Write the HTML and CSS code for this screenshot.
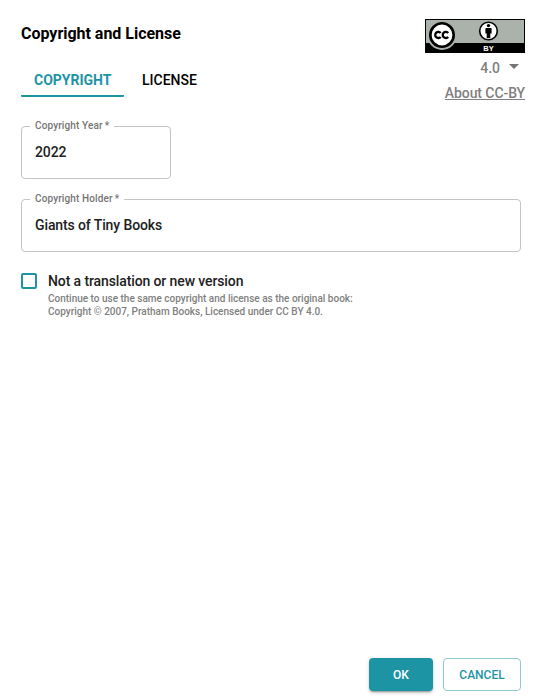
FILE: index.html
```html
<!DOCTYPE html>
<html lang="en">
<head>
<meta charset="utf-8">
<title>Copyright and License</title>
<link rel="stylesheet" href="styles.css">
</head>
<body>
<div class="dialog">
  <header class="header">
    <div class="heading">
      <h1 class="title">Copyright and License</h1>
      <nav class="tabs">
        <button class="tab tab-active">COPYRIGHT</button>
        <button class="tab">LICENSE</button>
      </nav>
    </div>
    <aside class="license">
      <svg class="badge" width="100" height="34" viewBox="0 0 100 34">
        <rect width="100" height="34" fill="#000"/>
        <rect x="1" y="1" width="98" height="23" fill="#aab2ab"/>
        <circle cx="17" cy="16" r="15" fill="#aab2ab"/>
        <circle cx="17" cy="16" r="11.7" fill="#fff" stroke="#000" stroke-width="2.6"/>
        <g fill="none" stroke="#000" stroke-width="2.3">
          <path d="M15.7 13.9A3.1 3.1 0 1 0 15.7 17.9"/>
          <path d="M23.2 13.9A3.1 3.1 0 1 0 23.2 17.9"/>
        </g>
        <circle cx="63.5" cy="12" r="8.8" fill="#fff" stroke="#000" stroke-width="1.6"/>
        <circle cx="63.5" cy="6.6" r="1.7"/>
        <path d="M61.2 9h4.6q.8 0 .8.8v4.7h-1.3v4.6h-3.6v-4.6h-1.3V9.8q0-.8.8-.8z"/>
        <text class="badge-text" x="63.5" y="31.7" text-anchor="middle">BY</text>
      </svg>
      <div class="version"><span>4.0</span><span class="arrow"></span></div>
      <a class="about">About CC-BY</a>
    </aside>
  </header>
  <main class="form">
    <fieldset class="field field-year">
      <legend>Copyright Year&thinsp;*</legend>
      <div class="value">2022</div>
    </fieldset>
    <fieldset class="field field-holder">
      <legend>Copyright Holder&thinsp;*</legend>
      <div class="value">Giants of Tiny Books</div>
    </fieldset>
    <div class="option">
      <span class="checkbox"></span>
      <div>
        <div class="option-label">Not a translation or new version</div>
        <div class="note">Continue to use the same copyright and license as the original book:<br>Copyright © 2007, Pratham Books, Licensed under CC BY 4.0.</div>
      </div>
    </div>
  </main>
  <footer class="actions">
    <button class="button primary">OK</button>
    <button class="button outlined">CANCEL</button>
  </footer>
</div>
</body>
</html>
```
FILE: styles.css
```css
* { box-sizing: border-box; }
body {
  margin: 0;
  background: #fff;
  color: #000;
  font-family: Roboto, sans-serif;
  font-weight: 500;
}
button { font-family: inherit; cursor: pointer; }
.dialog {
  display: flex;
  flex-direction: column;
  height: 699px;
  padding: 19px 19px 8px 21px;
}
.header {
  display: flex;
  justify-content: space-between;
  height: 100px;
}
.title {
  margin: 5px 0 0;
  font-size: 16px;
  line-height: 20px;
  font-weight: 700;
  letter-spacing: -0.02px;
}
.tabs { display: flex; gap: 5px; margin-top: 20px; }
.tab {
  height: 33px;
  padding: 1px 13px 0;
  border: 0;
  border-bottom: 2px solid transparent;
  background: none;
  color: #000;
  font-size: 14px;
  font-weight: 500;
}
.tab-active {
  width: 103px;
  border-color: #1d94a4;
  border-radius: 1px;
  color: #1d94a4;
  font-weight: 700;
}
.license {
  display: flex;
  flex-direction: column;
  align-items: flex-end;
  color: #808080;
  font-size: 14px;
}
.badge { display: block; }
.badge-text { fill: #fff; font: 700 7.5px "Liberation Sans", sans-serif; }
.version {
  display: flex;
  align-items: center;
  gap: 9px;
  margin-top: 6px;
  padding-right: 6px;
  line-height: 18px;
}
.arrow {
  margin-bottom: 3px;
  border: 5px solid transparent;
  border-top-color: #757575;
  border-bottom: 0;
}
.about {
  margin-top: 7px;
  line-height: 18px;
  letter-spacing: -0.08px;
  text-decoration: underline;
}
.form { padding-right: 4px; }
.field {
  height: 59px;
  min-width: 0;
  margin: 0;
  padding: 0 13px;
  border: 1px solid #c4c4c4;
  border-radius: 4px;
}
.field-year { width: 150px; margin-top: 1px; }
.field-holder { width: 500px; margin-top: 14px; }
.field legend {
  height: 12px;
  margin-left: -5px;
  padding: 0 5px;
  color: #757575;
  font-size: 10px;
  line-height: 12px;
  letter-spacing: 0.12px;
}
.value {
  margin-top: 11px;
  color: #212121;
  font-size: 14px;
  line-height: 18px;
  letter-spacing: -0.11px;
}
.option { display: flex; gap: 11px; margin-top: 19px; }
.checkbox {
  width: 16px;
  height: 16px;
  margin-top: 2px;
  border: 2px solid #1d94a4;
  border-radius: 2px;
}
.option-label {
  color: #212121;
  font-size: 14px;
  line-height: 20px;
  letter-spacing: -0.11px;
}
.note {
  margin-top: 1px;
  color: #808080;
  font-size: 10px;
  line-height: 13px;
}
.actions {
  display: flex;
  justify-content: flex-end;
  gap: 10px;
  margin-top: auto;
  padding-right: 4px;
}
.button {
  height: 33px;
  padding: 0;
  border: 0;
  border-radius: 4px;
  font-size: 12px;
  font-weight: 500;
}
.primary {
  width: 64px;
  background: #1d94a4;
  color: #fff;
  box-shadow: 0 3px 1px -2px #0003, 0 2px 2px #0002, 0 1px 5px #0002;
}
.outlined {
  width: 78px;
  border: 1px solid #8ecad2;
  background: #fff;
  color: #1d94a4;
}
```
